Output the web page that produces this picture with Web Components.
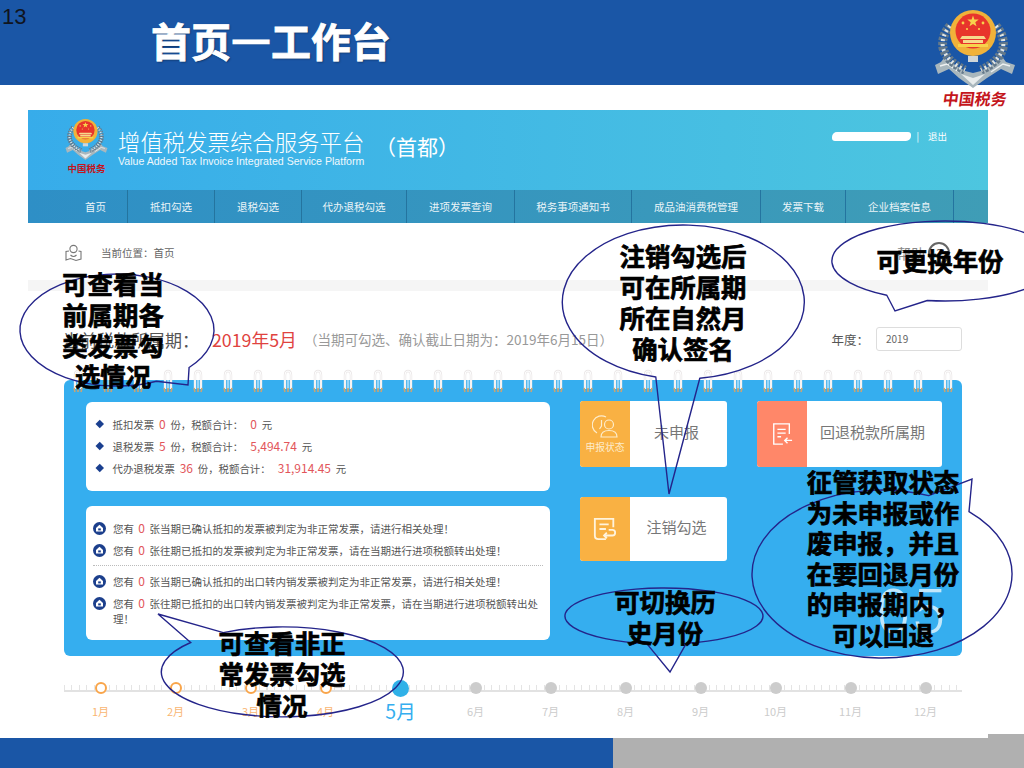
<!DOCTYPE html>
<html lang="zh">
<head>
<meta charset="utf-8">
<title>首页—工作台</title>
<style>
  html, body { margin: 0; padding: 0; background: #fff; }
</style>
</head>
<body>
<slide-page>
  <slide-header slot="top" num="13">首页<span style="-webkit-text-stroke:3px #fff">—</span>工作台</slide-header>
  <app-screen>
    <app-header></app-header>
    <app-nav>
      <nav-item style="width:100px;padding-left:36px">首页</nav-item>
      <nav-item style="width:87px">抵扣勾选</nav-item>
      <nav-item style="width:87px">退税勾选</nav-item>
      <nav-item style="width:105px">代办退税勾选</nav-item>
      <nav-item style="width:108px">进项发票查询</nav-item>
      <nav-item style="width:117px">税务事项通知书</nav-item>
      <nav-item style="width:129px">成品油消费税管理</nav-item>
      <nav-item style="width:85px">发票下载</nav-item>
      <nav-item style="width:108px">企业档案信息</nav-item>
    </app-nav>
    <app-crumb>当前位置：首页</app-crumb>
    <period-bar></period-bar>
    <calendar-panel>
      <info-card slot="left">
        <stat-line>抵扣发票 <b>0</b> 份，税额合计：&nbsp; <b>0</b> 元</stat-line>
        <stat-line>退税发票 <b>5</b> 份，税额合计：&nbsp; <b>5,494.74</b> 元</stat-line>
        <stat-line>代办退税发票 <b>36</b> 份，税额合计：&nbsp; <b>31,914.45</b> 元</stat-line>
      </info-card>
      <info-card slot="left" notices>
        <notice-line>您有 <b>0</b> 张当期已确认抵扣的发票被判定为非正常发票，请进行相关处理！</notice-line>
        <notice-line last>您有 <b>0</b> 张往期已抵扣的发票被判定为非正常发票，请在当期进行进项税额转出处理！</notice-line>
        <notice-line>您有 <b>0</b> 张当期已确认抵扣的出口转内销发票被判定为非正常发票，请进行相关处理！</notice-line>
        <notice-line>您有 <b>0</b> 张往期已抵扣的出口转内销发票被判定为非正常发票，请在当期进行进项税额转出处理！</notice-line>
      </info-card>
      <action-button slot="mid" tone="#f9b143" icon="status" caption="申报状态" style="height:66px;margin-top:-1px">未申报</action-button>
      <action-button slot="mid" tone="#f9b143" icon="undo" style="height:64px">注销勾选</action-button>
      <action-button slot="right" tone="#ff8769" icon="back" style="height:66px;margin-top:-1px">回退税款所属期</action-button>
    </calendar-panel>
    <month-line active="5"></month-line>
  </app-screen>
  <slide-footer slot="bottom"></slide-footer>

  <speech-bubble slot="over" c="117,330" r="97,56" arc="42,66" tip="188,385" tx="113" ty="268" lh="30.8">可查看当<br>前属期各<br>类发票勾<br>选情况</speech-bubble>
  <speech-bubble slot="over" c="683,302" r="121,77" arc="82,103" tip="669,494" tx="683" ty="240">注销勾选后<br>可在所属期<br>所在自然月<br>确认签名</speech-bubble>
  <speech-bubble slot="over" c="945,261" r="113,40" arc="99,121" tip="895,311" tx="940" ty="245">可更换年份</speech-bubble>
  <speech-bubble slot="over" c="882,574" r="130,84" arc="291,312" tip="972,479" tx="883" ty="466" lh="30.6">征管获取状态<br>为未申报或作<br>废申报<span style="font-family:'Noto Sans CJK TC'">，</span>并且<br>在要回退月份<br>的申报期内<span style="font-family:'Noto Sans CJK TC'">，</span><br>可以回退</speech-bubble>
  <speech-bubble slot="over" c="664,616" r="99,28" arc="77,100" tip="670,672" tx="665" ty="586">可切换历<br>史月份</speech-bubble>
  <speech-bubble slot="over" c="282,672" r="121,45" arc="221,241" tip="158,614" tx="282" ty="627">可查看非正<br>常发票勾选<br>情况</speech-bubble>
</slide-page>

<script>
const emblem = `
  <svg viewBox="0 0 80 80" width="100%" height="100%" aria-hidden="true">
    <path d="M0 57 L6 54 L9 50 L30 63 L38 65 L46 63 L68 50 L71 54 L80 57 L77 66 L66 61 L52 70 L38 80 L24 70 L14 61 L3 66 Z" fill="#a9b7bd"/>
    <path d="M26 66 L38 70 L50 66 L38 77 Z" fill="#e8ecec"/>
    <path d="M5 58 L12 56 L24 64 M75 58 L68 56 L56 64" fill="none" stroke="#eef1f1" stroke-width="1.5"/>
    <path d="M15 18 Q6 28 8 40 Q12 54 30 62 M61 18 Q70 28 68 40 Q64 54 46 62" fill="none" stroke="#64798a" stroke-width="9" stroke-dasharray="3 1.5"/>
    <path d="M15 18 Q6 28 8 40 Q12 54 30 62 M61 18 Q70 28 68 40 Q64 54 46 62" fill="none" stroke="#dfe5e6" stroke-width="4" stroke-dasharray="2 3"/>
    <circle cx="38" cy="25" r="23" fill="#f0b23a"/>
    <circle cx="38" cy="23" r="17.5" fill="#e8352c"/>
    <path d="M38 7.5 l1.4 4 4.3 .1-3.4 2.6 1.2 4.1-3.5-2.4-3.5 2.4 1.2-4.1-3.4-2.6 4.3-.1z" fill="#f7d24c"/>
    <circle cx="28" cy="15" r="1.4" fill="#f7d24c"/><circle cx="48" cy="15" r="1.4" fill="#f7d24c"/>
    <circle cx="32" cy="21" r="1.1" fill="#f7d24c"/><circle cx="44" cy="21" r="1.1" fill="#f7d24c"/>
    <path d="M27 28 H49 L51 31 H25 Z M28 32 H48 V35 H28 Z" fill="#f6d98c"/>
    <path d="M23 36 H53 V39 H23 Z" fill="#f7d24c"/>
    <path d="M33 48 H43 V54 H33 Z" fill="#cfd6d8"/>
  </svg>`;

class SlidePage extends HTMLElement {
  connectedCallback() {
    this.attachShadow({ mode: 'open' }).innerHTML = `
      <style>
        :host {
          display: flex;
          flex-direction: column;
          position: relative;
          width: 1024px;
          height: 768px;
          overflow: hidden;
          background: #fff;
          font-family: "Noto Sans CJK SC", "Liberation Sans", sans-serif;
        }
        main { flex: 1; padding: 25px 36px 0 28px; }
      </style>
      <slot name="top"></slot>
      <main><slot></slot></main>
      <slot name="bottom"></slot>
      <slot name="over"></slot>
    `;
  }
}
customElements.define('slide-page', SlidePage);

class SlideHeader extends HTMLElement {
  connectedCallback() {
    this.attachShadow({ mode: 'open' }).innerHTML = `
      <style>
        :host {
          display: flex;
          align-items: center;
          position: relative;
          height: 85px;
          flex: none;
          background: #1a56a6;
        }
        .num {
          position: absolute; left: 2px; top: 3px;
          font: 22px/28px "Liberation Sans", sans-serif;
          color: #10151f;
        }
        h1 {
          margin: 0 0 6px 151px;
          font-size: 40px;
          line-height: 78px;
          font-weight: 700;
          color: #fff;
          -webkit-text-stroke: .8px #fff;
          text-shadow: 1px 1px 2px rgba(0,0,0,.45);
        }
        .logo {
          position: absolute; left: 935px; top: 8px;
          width: 80px;
        }
        .mark { height: 80px; }
        .cn {
          margin-top: -1px;
          text-align: center;
          font: 700 16px/22px "Noto Sans CJK SC", sans-serif;
          color: #c4161c;
          transform: skewX(-8deg);
        }
      </style>
      <span class="num">${this.getAttribute('num')}</span>
      <h1><slot></slot></h1>
      <div class="logo"><div class="mark">${emblem}</div><div class="cn">中国税务</div></div>
    `;
  }
}
customElements.define('slide-header', SlideHeader);

class SlideFooter extends HTMLElement {
  connectedCallback() {
    this.attachShadow({ mode: 'open' }).innerHTML = `
      <style>
        :host { display: flex; flex: none; height: 30px; position: relative; }
        .blue { width: 613px; background: #1a56a6; }
        .gray { flex: 1; background: #b0b0b0; }
        .gray::after {
          content: '';
          position: absolute; right: 0; top: -4px;
          width: 36px; height: 4px;
          background: #b0b0b0;
        }
      </style>
      <div class="blue"></div><div class="gray"></div>
    `;
  }
}
customElements.define('slide-footer', SlideFooter);

class AppScreen extends HTMLElement {
  connectedCallback() {
    this.attachShadow({ mode: 'open' }).innerHTML = `
      <style>
        :host { display: block; width: 960px; height: 628px; background: #fff; }
      </style>
      <slot></slot>
    `;
  }
}
customElements.define('app-screen', AppScreen);

class AppHeader extends HTMLElement {
  connectedCallback() {
    this.attachShadow({ mode: 'open' }).innerHTML = `
      <style>
        :host {
          display: flex;
          align-items: flex-start;
          height: 80px;
          padding-left: 36px;
          box-sizing: border-box;
          color: #fff;
          background: linear-gradient(90deg, #37acea, #4dc6df);
        }
        .logo { width: 45px; margin-top: 8px; }
        .mark { height: 42px; }
        .cn {
          text-align: center;
          font: 700 9.5px/17px "Noto Sans CJK SC", sans-serif;
          color: #c4161c;
          white-space: nowrap;
        }
        .names { margin: 17px 0 0 9px; width: 250px; }
        .zh { font-size: 22.4px; line-height: 28px; font-weight: 300; white-space: nowrap; }
        .en { font: 10.6px/13px "Liberation Sans", sans-serif; white-space: nowrap; opacity: .92; }
        .city { margin: 21px 0 0 7px; font-size: 21px; line-height: 30px; white-space: nowrap; }
        .user {
          display: flex; align-items: center;
          margin: 20px 0 0 auto; padding-right: 41px;
          font-size: 9.5px; line-height: 12px;
        }
        .blob { width: 79px; height: 9px; border-radius: 5px 3px 5px 3px; background: #fff; }
        .sep { margin: 0 9px 0 5px; }
      </style>
      <div class="logo"><div class="mark">${emblem}</div><div class="cn">中国税务</div></div>
      <div class="names">
        <div class="zh">增值税发票综合服务平台</div>
        <div class="en">Value Added Tax Invoice Integrated Service Platform</div>
      </div>
      <div class="city">（首都）</div>
      <div class="user"><span class="blob"></span><span class="sep">|</span><span>退出</span></div>
    `;
  }
}
customElements.define('app-header', AppHeader);

class AppNav extends HTMLElement {
  connectedCallback() {
    this.attachShadow({ mode: 'open' }).innerHTML = `
      <style>
        :host {
          display: flex;
          height: 33px;
          background: linear-gradient(90deg, #2e8fc6, #3f9db6);
        }
      </style>
      <slot></slot>
    `;
  }
}
customElements.define('app-nav', AppNav);

class NavItem extends HTMLElement {
  connectedCallback() {
    this.attachShadow({ mode: 'open' }).innerHTML = `
      <style>
        :host {
          display: flex;
          align-items: center;
          justify-content: center;
          box-sizing: border-box;
          flex: none;
          font-size: 10.5px;
          color: #eaf4f8;
          border-right: 1px solid #24749f;
        }
      </style>
      <slot></slot>
    `;
  }
}
customElements.define('nav-item', NavItem);

class AppCrumb extends HTMLElement {
  connectedCallback() {
    this.attachShadow({ mode: 'open' }).innerHTML = `
      <style>
        :host {
          display: flex;
          align-items: center;
          height: 68px;
          padding: 2px 38px 0 37px;
          box-sizing: border-box;
          font-size: 10.5px;
          color: #666;
          border-bottom: 11px solid #f5f5f5;
        }
        svg { flex: none; margin-right: 19px; }
        .help { display: flex; align-items: center; gap: 3px; margin-left: auto; font-size: 14px; color: #888; }
        .q {
          box-sizing: border-box;
          width: 22px; height: 22px;
          border: 2px solid #666; border-radius: 50%;
          display: flex; align-items: center; justify-content: center;
          font-size: 12px; color: #666;
        }
      </style>
      <svg width="17" height="18" viewBox="0 0 17 18" fill="none" stroke="#777" stroke-width="1.1">
        <circle cx="8.5" cy="5" r="3.6"/>
        <path d="M4 7 L1 7.5 V16 L5.5 14.5 L11 16.5 L16 15 V7.5 L13.5 7"/>
        <path d="M5.5 11 Q8.5 14 11.5 11"/>
      </svg>
      <span><slot></slot></span>
      <span class="help">帮助<span class="q">?</span></span>
    `;
  }
}
customElements.define('app-crumb', AppCrumb);

class PeriodBar extends HTMLElement {
  connectedCallback() {
    this.attachShadow({ mode: 'open' }).innerHTML = `
      <style>
        :host {
          display: flex;
          align-items: center;
          height: 89px;
          padding: 7px 26px 0 35px;
          box-sizing: border-box;
          white-space: nowrap;
        }
        .label { font-size: 17px; color: #555; width: 149px; }
        .red { font-size: 17.8px; color: #e0433f; width: 92px; }
        .note { font-size: 13.5px; color: #999; }
        .year { margin-left: auto; font-size: 12.5px; color: #555; }
        .box {
          margin-left: 7px;
          width: 86px; height: 24px;
          box-sizing: border-box;
          padding-left: 9px;
          border: 1px solid #ddd;
          border-radius: 3px;
          font-size: 10px; line-height: 22px;
          color: #666;
        }
      </style>
      <span class="label">当前税款所属期：</span>
      <span class="red">2019年5月</span>
      <span class="note">（当期可勾选、确认截止日期为：2019年6月15日）</span>
      <span class="year">年度：</span>
      <span class="box">2019</span>
    `;
  }
}
customElements.define('period-bar', PeriodBar);

class CalendarPanel extends HTMLElement {
  connectedCallback() {
    const rings = Array.from({ length: 30 }, () => `
      <svg width="30" height="24" viewBox="0 0 30 24" fill="none">
        <path d="M12 20 V6 Q12 2 15 2 Q18 2 18 6 V20" stroke="#ebe7e7" stroke-width="2.4"/>
        <path d="M12 20 V6 Q12 2 15 2 Q18 2 18 6 V20 M15 5 V20" stroke="#fff" stroke-width="1"/>
        <path d="M11 19 L12 23 M15 19 V23 M19 19 L18 23" stroke="#c9a573" stroke-width="1.6"/>
      </svg>`).join('');
    this.attachShadow({ mode: 'open' }).innerHTML = `
      <style>
        :host {
          display: grid;
          grid-template-columns: 464px 147px 185px;
          column-gap: 30px;
          position: relative;
          width: 898px;
          height: 276px;
          margin-left: 36px;
          padding: 22px 0 0 22px;
          box-sizing: border-box;
          background: #35aeef;
          border-radius: 6px;
        }
        .col { display: flex; flex-direction: column; align-items: stretch; }
        .left { gap: 15px; }
        .mid { gap: 30px; }
        .rings {
          position: absolute; left: -1px; top: -11px;
          display: flex;
        }
        .rings svg { flex: none; display: block; }
        .big {
          position: absolute; right: 17px; bottom: 14px;
          font: 300 62px/60px Roboto, "Liberation Sans", sans-serif;
          color: rgba(255,255,255,.7);
        }
      </style>
      <div class="col left"><slot name="left"></slot></div>
      <div class="col mid"><slot name="mid"></slot></div>
      <div class="col"><slot name="right"></slot></div>
      <div class="big">05</div>
      <div class="rings">${rings}</div>
    `;
  }
}
customElements.define('calendar-panel', CalendarPanel);

class InfoCard extends HTMLElement {
  connectedCallback() {
    const notices = this.hasAttribute('notices');
    this.attachShadow({ mode: 'open' }).innerHTML = `
      <style>
        :host {
          display: block;
          box-sizing: border-box;
          background: #fff;
          border-radius: 6px;
          height: ${notices ? 134 : 89}px;
          padding: ${notices ? '14.5px 7px 0' : '11px 0 0 11px'};
        }
      </style>
      <slot></slot>
    `;
  }
}
customElements.define('info-card', InfoCard);

class StatLine extends HTMLElement {
  connectedCallback() {
    this.attachShadow({ mode: 'open' }).innerHTML = `
      <style>
        :host {
          display: flex;
          align-items: center;
          gap: 10px;
          height: 22px;
          font-size: 10.4px;
          color: #555;
          white-space: pre;
        }
        i { flex: none; width: 5.5px; height: 5.5px; background: #1a3f8f; transform: rotate(45deg); }
        ::slotted(b) { font-weight: 400; font-size: 12px; line-height: 10px; padding: 0 2.5px; color: #e2555a; }
      </style>
      <i></i><span><slot></slot></span>
    `;
  }
}
customElements.define('stat-line', StatLine);

class NoticeLine extends HTMLElement {
  connectedCallback() {
    const last = this.hasAttribute('last');
    this.attachShadow({ mode: 'open' }).innerHTML = `
      <style>
        :host {
          display: flex;
          gap: 7px;
          margin-bottom: 7px;
          font-size: 10.5px;
          line-height: 15px;
          color: #555;
          ${last ? 'padding-bottom: 7.5px; margin-bottom: 8px; border-bottom: 1px dotted #bbb;' : ''}
        }
        svg { flex: none; margin-top: 1px; }
        ::slotted(b) { font-weight: 400; font-size: 12px; line-height: 10px; padding: 0 2px; color: #e2555a; }
        span { flex: 1; }
      </style>
      <svg width="13" height="13" viewBox="0 0 13 13">
        <circle cx="6.5" cy="6.5" r="6.5" fill="#1c3f8c"/>
        <path d="M6.5 2.8 L10 6 V9.6 H3 V6 Z" fill="#fff"/>
        <rect x="5.2" y="6.4" width="2.6" height="2" fill="#1c3f8c"/>
      </svg>
      <span><slot></slot></span>
    `;
  }
}
customElements.define('notice-line', NoticeLine);

const buttonIcons = {
  status: `<svg width="26" height="23" viewBox="0 0 26 23" fill="none" stroke="#fdeccb" stroke-width="1.2">
    <path d="M14 2 A9 9 0 1 0 5 18"/><path d="M9.5 5 V11 L7.5 14"/>
    <circle cx="17" cy="9.5" r="4.5"/><path d="M9 22 Q9 15.5 17 15.5 Q25 15.5 25 22 Z"/></svg>`,
  undo: `<svg width="24" height="24" viewBox="0 0 26 26" fill="none" stroke="#fff3dc" stroke-width="2">
    <path d="M14 24 H6 Q2 24 2 20 V2 H22 V11"/><path d="M7 8 H17 M7 13 H14"/>
    <path d="M12 20 H21 Q24 20 24 17 Q24 14 21 14 H17 M15 17 L12 20 L15 23"/></svg>`,
  back: `<svg width="22" height="24" viewBox="0 0 24 26" fill="none" stroke="#fff" stroke-width="1.5">
    <path d="M20 13 V2 H3 V24 H13"/><path d="M7 8 H16 M7 12 H16 M7 16 H11"/>
    <path d="M23 20 H15 M18 17 L15 20 L18 23"/></svg>`
};

class ActionButton extends HTMLElement {
  connectedCallback() {
    const caption = this.getAttribute('caption');
    this.attachShadow({ mode: 'open' }).innerHTML = `
      <style>
        :host {
          display: flex;
          box-sizing: border-box;
          overflow: hidden;
          background: #fff;
          border-radius: 3px;
          font-size: 15px;
          color: #777;
        }
        .tone {
          flex: none;
          width: 50px;
          display: flex;
          flex-direction: column;
          align-items: center;
          justify-content: center;
          gap: 3px;
          background: ${this.getAttribute('tone')};
        }
        .cap { font-size: 9.8px; line-height: 12px; color: #fdeccb; white-space: nowrap; }
        .text { flex: 1; display: flex; align-items: center; justify-content: center; padding: 0 4px 5px 0; }
      </style>
      <div class="tone">${buttonIcons[this.getAttribute('icon')]}${caption ? `<span class="cap">${caption}</span>` : ''}</div>
      <div class="text"><slot></slot></div>
    `;
  }
}
customElements.define('action-button', ActionButton);

class MonthLine extends HTMLElement {
  connectedCallback() {
    const active = Number(this.getAttribute('active'));
    const months = Array.from({ length: 12 }, (_, i) => {
      const n = i + 1;
      const state = n < active ? 'past' : n === active ? 'now' : 'next';
      return `<div class="m ${state}"><span class="dot"></span><span class="lab">${n}月</span></div>`;
    }).join('');
    this.attachShadow({ mode: 'open' }).innerHTML = `
      <style>
        :host {
          display: grid;
          grid-template-columns: repeat(12, 75px);
          position: relative;
          width: 899px;
          margin-left: 35px;
          padding-top: 22px;
        }
        .track {
          position: absolute; left: 1px; right: 0; top: 29px;
          height: 5px;
          border-bottom: 2px solid #e2e2e2;
          background: repeating-linear-gradient(90deg, #e4e4e4 0 1px, transparent 1px 7.5px);
        }
        .m { position: relative; display: flex; flex-direction: column; align-items: center; }
        .dot { display: block; box-sizing: border-box; width: 12px; height: 12px; margin: 4px 0; border-radius: 50%; background: #ccc; }
        .past .dot { background: #fff; border: 2px solid #f9a54a; }
        .now .dot { width: 17px; height: 17px; margin: 1.5px 0; background: #2fb1e8; }
        .lab { margin-top: 3px; font-size: 11px; line-height: 20px; color: #ccc; }
        .past .lab { color: #f9b673; }
        .now .lab { font-size: 19.5px; color: #35aeef; }
      </style>
      <div class="track"></div>
      ${months}
    `;
  }
}
customElements.define('month-line', MonthLine);

class SpeechBubble extends HTMLElement {
  connectedCallback() {
    const nums = (name) => this.getAttribute(name).split(',').map(Number);
    const [cx, cy] = nums('c');
    const [rx, ry] = nums('r');
    const [a1, a2] = nums('arc');
    const [tipX, tipY] = nums('tip');
    const at = (deg) => {
      const rad = deg * Math.PI / 180;
      return `${(cx + rx * Math.cos(rad)).toFixed(1)} ${(cy + ry * Math.sin(rad)).toFixed(1)}`;
    };
    const d = `M${at(a1)} L${tipX} ${tipY} L${at(a2)} A${rx} ${ry} 0 1 1 ${at(a1)} Z`;
    const lh = this.getAttribute('lh') || 31;
    this.attachShadow({ mode: 'open' }).innerHTML = `
      <style>
        :host { position: absolute; inset: 0; display: block; pointer-events: none; }
        svg { position: absolute; left: 0; top: 0; }
        .text {
          position: absolute;
          left: ${this.getAttribute('tx')}px;
          top: ${this.getAttribute('ty')}px;
          transform: translateX(-50%);
          white-space: nowrap;
          text-align: center;
          font-size: 25.4px;
          line-height: ${lh}px;
          font-weight: 700;
          color: #000;
          -webkit-text-stroke: .7px #000;
        }
      </style>
      <svg width="1024" height="768" fill="none">
        <path d="${d}" stroke="#24248a" stroke-width="1.4"/>
      </svg>
      <div class="text"><slot></slot></div>
    `;
  }
}
customElements.define('speech-bubble', SpeechBubble);
</script>
</body>
</html>
